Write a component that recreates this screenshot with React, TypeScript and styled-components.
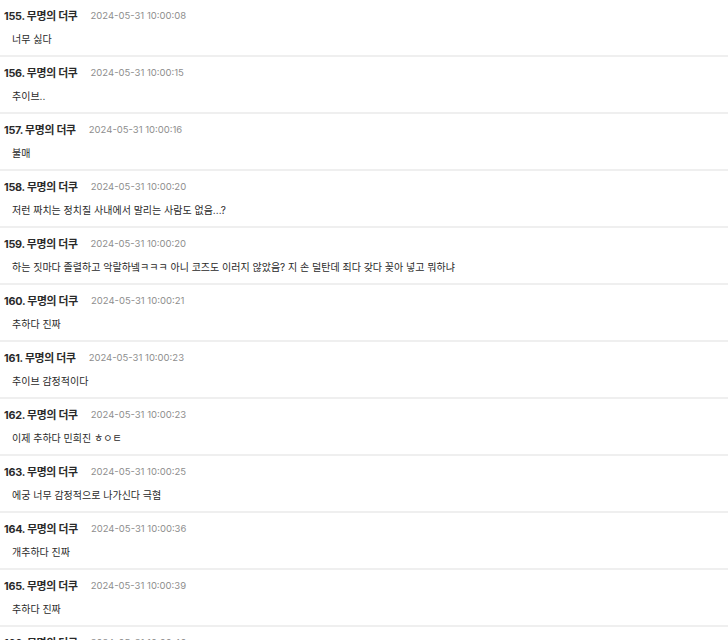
import React from "react";
import styled, { createGlobalStyle } from "styled-components";

const Global = createGlobalStyle`
  html, body { margin: 0; padding: 0; background: #fff; }
  body { font-family: "Inter", "Noto Sans CJK KR", sans-serif; color: #222; }
`;

const List = styled.div`
  display: flex;
  flex-direction: column;
`;

const Row = styled.div`
  display: flex;
  flex-direction: column;
  gap: 8px;
  padding: 7px 4px 8px;
  border-bottom: 2px solid #efefef;
`;

const Header = styled.div`
  display: flex;
  align-items: center;
  gap: 13px;
  height: 16px;
`;

const Name = styled.span`
  font-size: 10.8px;
  font-weight: 700;
  color: #2a2a2a;
  letter-spacing: -0.25px;
`;

const DateText = styled.span`
  font-size: 9.5px;
  color: #8e8e8e;
`;

const Body = styled.div`
  padding-left: 8px;
  height: 16px;
  line-height: 16px;
  font-size: 10px;
  color: #2a2a2a;
`;

const data: [number, string, string][] = [
  [155, "2024-05-31 10:00:08", "너무 싫다"],
  [156, "2024-05-31 10:00:15", "추이브.."],
  [157, "2024-05-31 10:00:16", "불매"],
  [158, "2024-05-31 10:00:20", "저런 짜치는 정치질 사내에서 말리는 사람도 없음...?"],
  [159, "2024-05-31 10:00:20", "하는 짓마다 졸렬하고 악랄하넼ㅋㅋㅋ 아니 코즈도 이러지 않았음? 지 손 덜탄데 죄다 갖다 꽂아 넣고 뭐하냐"],
  [160, "2024-05-31 10:00:21", "추하다 진짜"],
  [161, "2024-05-31 10:00:23", "추이브 감정적이다"],
  [162, "2024-05-31 10:00:23", "이제 추하다 민희진 ㅎㅇㅌ"],
  [163, "2024-05-31 10:00:25", "에궁 너무 감정적으로 나가신다 극혐"],
  [164, "2024-05-31 10:00:36", "개추하다 진짜"],
  [165, "2024-05-31 10:00:39", "추하다 진짜"],
  [166, "2024-05-31 10:00:40", "추하다"],
];

export default function App() {
  return (
    <>
      <Global />
      <List>
        {data.map(([n, d, t]) => (
          <Row key={n}>
            <Header>
              <Name>{n}. 무명의 더쿠</Name>
              <DateText>{d}</DateText>
            </Header>
            <Body>{t}</Body>
          </Row>
        ))}
      </List>
    </>
  );
}
